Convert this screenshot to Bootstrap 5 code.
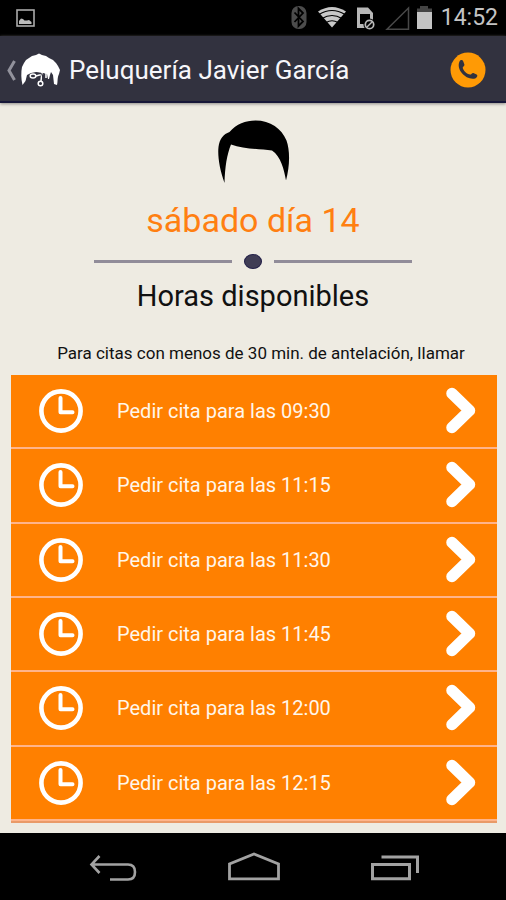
<!DOCTYPE html>
<html lang="es">
<head>
<meta charset="utf-8">
<meta name="viewport" content="width=device-width, initial-scale=1">
<title>Peluquería Javier García</title>
<link href="https://cdn.jsdelivr.net/npm/bootstrap@5.3.0/dist/css/bootstrap.min.css" rel="stylesheet">
<style>
  body { font-family: Roboto, "Liberation Sans", sans-serif; background: #eeebe2; color: #111; }
  svg { display: block; flex: none; }
  button { color: inherit; }
  .status-bar { height: 36px; background: #000; color: #c4c4c4; font-size: 23px; line-height: 36px; padding: 0 8px 0 16px; }
  .app-bar { height: 67px; background: #32323f; border-bottom: 2px solid #171738; padding: 2px 20px 0 6px; box-shadow: 0 1px 3px #8c8a86; }
  .app-bar a { color: #f6f6fa; }
  .app-title { font-size: 26px; line-height: 32px; font-weight: 400; padding-left: 9px; }
  .day-head { padding-top: 17px; }
  .day-name { font-size: 34px; line-height: 40px; font-weight: 400; color: #ff7f11; margin: 16px 0 0; }
  .divider { width: 318px; gap: 12px; margin-top: 14px; }
  .divider-line { height: 3px; background: #918c99; }
  .divider-dot { width: 18px; height: 15px; border-radius: 50%; background: #403d55; border: 1px solid #221f48; }
  .hours-title { font-size: 29px; line-height: 36px; font-weight: 400; margin: 9px 0 0; }
  .notice { font-size: 17px; line-height: 24px; margin: 27px 0 10px; padding-left: 16px; }
  .slots { margin: 0 9px 10px 11px; border-bottom: 2px solid #e99a68; }
  .slot, .slot:hover, .slot:focus { background: #ff8000; color: #fff6ea; }
  .slot { border: 0 solid #ffb48a; border-bottom-width: 2px; font-size: 20px; line-height: 24px; padding: 0 20px 0 28px; }
  .slot-label { padding-left: 34px; }
  .nav-keys { height: 67px; background: #000; padding-top: 2px; }
</style>
<script src="https://cdn.jsdelivr.net/npm/bootstrap@5.3.0/dist/js/bootstrap.bundle.min.js" defer></script>
</head>
<body class="d-flex flex-column min-vh-100">
<svg class="d-none" aria-hidden="true">
  <symbol id="clock" viewBox="0 0 44 44"><circle cx="22" cy="22" r="19.6" fill="none" stroke="#fff" stroke-width="4.6"/><path d="M21.500 9v14.200h12" fill="none" stroke="#fff" stroke-width="4" stroke-linecap="round" stroke-linejoin="round"/></symbol>
  <symbol id="chevron" viewBox="0 0 32 48"><path d="M7 6.500 24.500 23.500 7 40.500" fill="none" stroke="#fff" stroke-width="11.500" stroke-linecap="round" stroke-linejoin="round"/></symbol>
</svg>

<div class="status-bar d-flex align-items-center">
  <svg width="20" height="18" viewBox="0 0 20 18" aria-hidden="true"><rect x="1" y="1" width="17" height="16" fill="none" stroke="#aaa" stroke-width="1.600"/><path d="M3 15v-3l2-2.500 2 .5 1.500 1.500 2.500 0 2-.5 2.500 2v2z" fill="#bbb"/></svg>
  <div class="d-flex align-items-center ms-auto">
    <svg width="142" height="30" viewBox="293 3 142 30" aria-hidden="true">
      <rect x="293.500" y="6" width="15" height="23" rx="7" fill="#4c4c4c"/>
      <path d="M296.500 12.500l8.500 9-4.500 4.500V8.500l4.500 4.500-8.500 9" fill="none" stroke="#000" stroke-width="1.800"/>
      <path d="M320 11.500q14-9 28 0L334 27.500z" fill="#c8c8c8"/>
      <path d="M321 14.500q13-8 26 0M324 18.500q10-6 20 0M328 22.500q6-3.500 12 0" fill="none" stroke="#000" stroke-width="1.200"/>
      <path d="M359 7.500h11l5 5.500v15h-16z" fill="#b8b8b8"/><path d="M362 14h10v10h-10z" fill="#000"/>
      <circle cx="371.500" cy="24.500" r="6" fill="#000"/><circle cx="371.500" cy="24.500" r="4.200" fill="none" stroke="#bbb" stroke-width="1.700"/><path d="M368.500 27.500l6-6" stroke="#bbb" stroke-width="1.500"/>
      <path d="M389 29.300 410.500 8v21.300z" fill="none" stroke="#484848" stroke-width="1.500"/>
      <path d="M422 6h8v2.500h4V12h-15V8.500h3z" fill="#444"/><path d="M419 12h15v17h-15z" fill="#c4c4c4"/>
    </svg>
    <span class="ps-2">14:52</span>
  </div>
</div>

<header class="app-bar d-flex align-items-center">
  <a href="#" class="d-flex align-items-center text-decoration-none">
    <svg width="54" height="36" viewBox="6 51 54 36" aria-hidden="true">
      <path d="M14.500 60 9 69.500 14.500 79" fill="none" stroke="#92929c" stroke-width="3"/>
      <path d="M22.500 84C21 78 21 71 22 66l2-4 2-3 3-2 3-2 4-1 3-1.500 3 1.500 4 1 3 2 4 2 3 3 2 3 2 4-1 4c-2 4-1 8-2 11l-3-1-1-9-2-3-1 3-1 4h-1l-1-5-4-1-7-1-5 1-4 2-1.500 6z" fill="#fff"/>
      <g fill="none" stroke="#fff" stroke-width="1.500"><ellipse cx="33" cy="75" rx="2.800" ry="2"/><circle cx="40.500" cy="82.500" r="2.300"/><path d="M36 75l7-2M41 80l1-9M46 72v5"/></g>
      <path d="M36 72l6 1 1 4" fill="none" stroke="#32323f" stroke-width="1.200"/>
    </svg>
    <h1 class="app-title mb-0">Peluquería Javier García</h1>
  </a>
  <button type="button" class="btn p-0 border-0 ms-auto" aria-label="Llamar">
    <svg width="36" height="36" viewBox="0 0 36 36" aria-hidden="true"><circle cx="18" cy="18" r="17.500" fill="#ff9a05"/><path d="M9.500 9.500c1-1.800 3-2 3.700-.3l1.200 3.200c.4 1.300-1.600 2-1.700 3.200.4 3.200 4 6.500 7.500 7 1.300 0 1.800-2 3.200-1.600l3.200 1.500c1.400.9.700 2.800-.9 3.700C17.500 29.200 5.500 18.500 9.500 9.500z" fill="#32323f"/></svg>
  </button>
</header>

<main class="d-flex flex-column flex-grow-1">
  <section class="day-head d-flex flex-column align-items-center text-center">
    <svg width="74" height="64" viewBox="216 120 74 64" aria-hidden="true"><path d="M224.500 183c-5-14-7-27-6-36 1-8 5-13 11-15 7-8 16-11.500 26-11.500 15 0 26 8 31 20 3.500 10 3.500 25-.5 40-2-11-5-24-14-30-12-1.500-29-1.500-41-6-4 10-6 22-6.500 38.500z" fill="#000"/></svg>
    <h2 class="day-name">sábado día 14</h2>
    <div class="divider d-flex align-items-center justify-content-center" aria-hidden="true">
      <div class="divider-line flex-fill"></div><div class="divider-dot"></div><div class="divider-line flex-fill"></div>
    </div>
    <h3 class="hours-title">Horas disponibles</h3>
    <p class="notice">Para citas con menos de 30 min. de antelación, llamar</p>
  </section>

  <div class="slots d-flex flex-column flex-grow-1">
    <button type="button" class="slot btn rounded-0 d-flex align-items-center flex-fill"><svg width="44" height="44" aria-hidden="true"><use href="#clock"/></svg><span class="slot-label">Pedir cita para las 09:30</span><svg class="ms-auto" width="32" height="48" aria-hidden="true"><use href="#chevron"/></svg></button>
    <button type="button" class="slot btn rounded-0 d-flex align-items-center flex-fill"><svg width="44" height="44" aria-hidden="true"><use href="#clock"/></svg><span class="slot-label">Pedir cita para las 11:15</span><svg class="ms-auto" width="32" height="48" aria-hidden="true"><use href="#chevron"/></svg></button>
    <button type="button" class="slot btn rounded-0 d-flex align-items-center flex-fill"><svg width="44" height="44" aria-hidden="true"><use href="#clock"/></svg><span class="slot-label">Pedir cita para las 11:30</span><svg class="ms-auto" width="32" height="48" aria-hidden="true"><use href="#chevron"/></svg></button>
    <button type="button" class="slot btn rounded-0 d-flex align-items-center flex-fill"><svg width="44" height="44" aria-hidden="true"><use href="#clock"/></svg><span class="slot-label">Pedir cita para las 11:45</span><svg class="ms-auto" width="32" height="48" aria-hidden="true"><use href="#chevron"/></svg></button>
    <button type="button" class="slot btn rounded-0 d-flex align-items-center flex-fill"><svg width="44" height="44" aria-hidden="true"><use href="#clock"/></svg><span class="slot-label">Pedir cita para las 12:00</span><svg class="ms-auto" width="32" height="48" aria-hidden="true"><use href="#chevron"/></svg></button>
    <button type="button" class="slot btn rounded-0 d-flex align-items-center flex-fill"><svg width="44" height="44" aria-hidden="true"><use href="#clock"/></svg><span class="slot-label">Pedir cita para las 12:15</span><svg class="ms-auto" width="32" height="48" aria-hidden="true"><use href="#chevron"/></svg></button>
  </div>
</main>

<nav class="nav-keys d-flex align-items-center justify-content-center gap-5" aria-label="Sistema">
  <button type="button" class="btn p-0 border-0 mx-3" aria-label="Atrás"><svg width="60" height="32" viewBox="83 853 60 32" fill="none" stroke="#a2a2a2" stroke-width="2.600" aria-hidden="true"><path d="M99.500 857 91.500 865.500 99.500 874M91.500 865.500H128q7 0 7 7.500t-7 7.500H110"/></svg></button>
  <button type="button" class="btn p-0 border-0 mx-3" aria-label="Inicio"><svg width="60" height="32" viewBox="223 853 60 32" fill="none" stroke="#a2a2a2" stroke-width="2.800" aria-hidden="true"><path d="M229.500 879.800V865L254 855 278.500 865V879.800z"/></svg></button>
  <button type="button" class="btn p-0 border-0 mx-3" aria-label="Recientes"><svg width="60" height="32" viewBox="364 853 60 32" fill="none" stroke="#a2a2a2" stroke-width="3" aria-hidden="true"><path d="M373.500 865.500h37v14.300h-37zM382.500 858H418.500V874"/></svg></button>
</nav>
</body>
</html>
